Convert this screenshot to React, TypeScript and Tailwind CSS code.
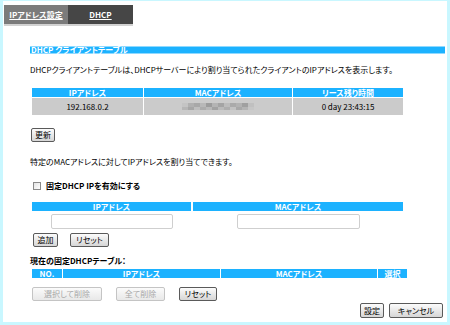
import React from 'react';

const font = "font-['Noto_Sans_CJK_JP','Noto_Sans_CJK_SC',sans-serif] [font-feature-settings:'palt']";

interface BtnProps {
  children: React.ReactNode;
  className?: string;
  disabled?: boolean;
}

const Btn: React.FC<BtnProps> = ({ children, className = '', disabled }) => (
  <button
    disabled={disabled}
    className={`flex items-center justify-center rounded-[2px] border text-[8px] leading-none ${
      disabled
        ? 'border-[#c4c4c4] text-[#a8a8a8] bg-linear-to-b from-[#fbfbfb] to-[#e8e8e8]'
        : 'border-[#5a5a5a] text-black bg-linear-to-b from-[#fcfcfc] to-[#d6d6d6]'
    } ${className}`}
  >
    {children}
  </button>
);

const Head: React.FC<{ children?: React.ReactNode; className?: string }> = ({ children, className = '' }) => (
  <div className={`h-[9px] bg-[#1cb2ff] text-white text-[8px] font-bold leading-[9px] text-center ${className}`}>
    {children}
  </div>
);

// mosaic used to hide the MAC address
const mosaic = [
  'bg-[#c4c4c4]', 'bg-[#b0b0b0]', 'bg-[#a8a8a8]', 'bg-[#b8b8b8]', 'bg-[#9c9c9c]', 'bg-[#b4b4b4]',
  'bg-[#a4a4a4]', 'bg-[#bcbcbc]', 'bg-[#aaaaaa]', 'bg-[#b2b2b2]', 'bg-[#a0a0a0]', 'bg-[#c0c0c0]',
  'bg-[#b6b6b6]', 'bg-[#a6a6a6]', 'bg-[#bebebe]', 'bg-[#acacac]', 'bg-[#b8b8b8]', 'bg-[#a2a2a2]',
  'bg-[#bababa]', 'bg-[#aeaeae]', 'bg-[#c2c2c2]', 'bg-[#a8a8a8]', 'bg-[#b4b4b4]', 'bg-[#c6c6c6]',
];

export default function App() {
  return (
    <div className={`w-[450px] h-[325px] bg-[#c9f7ff] pl-[3px] pt-[1px] pr-[3px] pb-[3px] ${font}`}>
      <div className="h-full bg-white flex flex-col">
        {/* tabs */}
        <div className="mt-[4px] ml-[1px] flex">
          <div className="w-[64px] h-[19px] bg-[#7b7b7b] flex items-center justify-center text-white text-[8px] font-bold underline">
            IPアドレス設定
          </div>
          <div className="w-[65px] h-[19px] bg-[#464646] flex items-center justify-center text-white text-[8px] font-bold underline">
            DHCP
          </div>
        </div>
        <div className="ml-[1px] w-[129px] h-[2px] bg-[#d2d2d2]" />

        <div className="pl-[27px] pr-[2px] flex flex-col">
          {/* section bar */}
          <div className="mt-[20px] h-[8px] bg-[#1cb2ff] border-y border-[#8fd9ff] text-white text-[8px] font-bold leading-[6px] pl-[1px]">
            DHCP クライアントテーブル
          </div>

          <p className="mt-[11px] h-[10px] text-[8px] leading-[10px] text-black">
            DHCPクライアントテーブルは、DHCPサーバーにより割り当てられたクライアントのIPアドレスを表示します。
          </p>

          {/* client table */}
          <div className="mt-[13px] ml-[2px] w-[371px] grid grid-cols-[111px_148px_110px] gap-x-[1px] gap-y-[1px]">
            <Head>IPアドレス</Head>
            <Head>MACアドレス</Head>
            <Head>リース残り時間</Head>
            <div className="h-[17px] bg-[#cbcbcb] text-[8px] flex items-center justify-center">192.168.0.2</div>
            <div className="h-[17px] bg-[#cbcbcb] flex items-center justify-center">
              <div className="w-[72px] h-[7px] grid grid-cols-12">
                {mosaic.map((c, i) => (
                  <div key={i} className={c} />
                ))}
              </div>
            </div>
            <div className="h-[17px] bg-[#cbcbcb] text-[8px] flex items-center justify-center">0 day 23:43:15</div>
          </div>

          <Btn className="mt-[13px] ml-[1px] w-[24px] h-[14px]">更新</Btn>

          <p className="mt-[15px] h-[10px] text-[8px] leading-[10px]">
            特定のMACアドレスに対してIPアドレスを割り当てできます。
          </p>

          <div className="mt-[14px] ml-[3px] h-[10px] flex items-center gap-[5px]">
            <span className="w-[8px] h-[8px] border border-[#8a8a8a] bg-linear-to-br from-[#e4e4e4] to-white" />
            <span className="text-[8px] font-bold leading-none">固定DHCP IPを有効にする</span>
          </div>

          {/* static entry */}
          <div className="mt-[11px] ml-[2px] w-[371px] grid grid-cols-[159px_210px] gap-x-[2px]">
            <Head>IPアドレス</Head>
            <Head>MACアドレス</Head>
            <div className="mt-[3px] flex justify-center">
              <div className="w-[122px] h-[15px] border border-[#cfcfcf] rounded-[2px]" />
            </div>
            <div className="mt-[3px] flex justify-center">
              <div className="w-[123px] h-[15px] border border-[#cfcfcf] rounded-[2px]" />
            </div>
          </div>

          <div className="mt-[4px] ml-[3px] flex gap-[12px]">
            <Btn className="w-[25px] h-[14px]">追加</Btn>
            <Btn className="w-[39px] h-[14px]">リセット</Btn>
          </div>

          <p className="mt-[9px] h-[10px] text-[8px] font-bold leading-[10px]">現在の固定DHCPテーブル：</p>

          <div className="mt-[3px] ml-[2px] w-[376px] grid grid-cols-[30px_157px_156px_29px] gap-x-[1px]">
            <Head>NO.</Head>
            <Head>IPアドレス</Head>
            <Head>MACアドレス</Head>
            <Head>選択</Head>
          </div>

          <div className="mt-[9px] ml-[2px] flex gap-[14px]">
            <Btn disabled className="w-[70px] h-[14px]">選択して削除</Btn>
            <Btn disabled className="w-[49px] h-[14px]">全て削除</Btn>
            <Btn className="w-[38px] h-[14px]">リセット</Btn>
          </div>

          <div className="mt-[2px] mr-[2px] flex justify-end gap-[5px]">
            <Btn className="w-[24px] h-[15px]">設定</Btn>
            <Btn className="w-[54px] h-[15px]">キャンセル</Btn>
          </div>
        </div>
      </div>
    </div>
  );
}
